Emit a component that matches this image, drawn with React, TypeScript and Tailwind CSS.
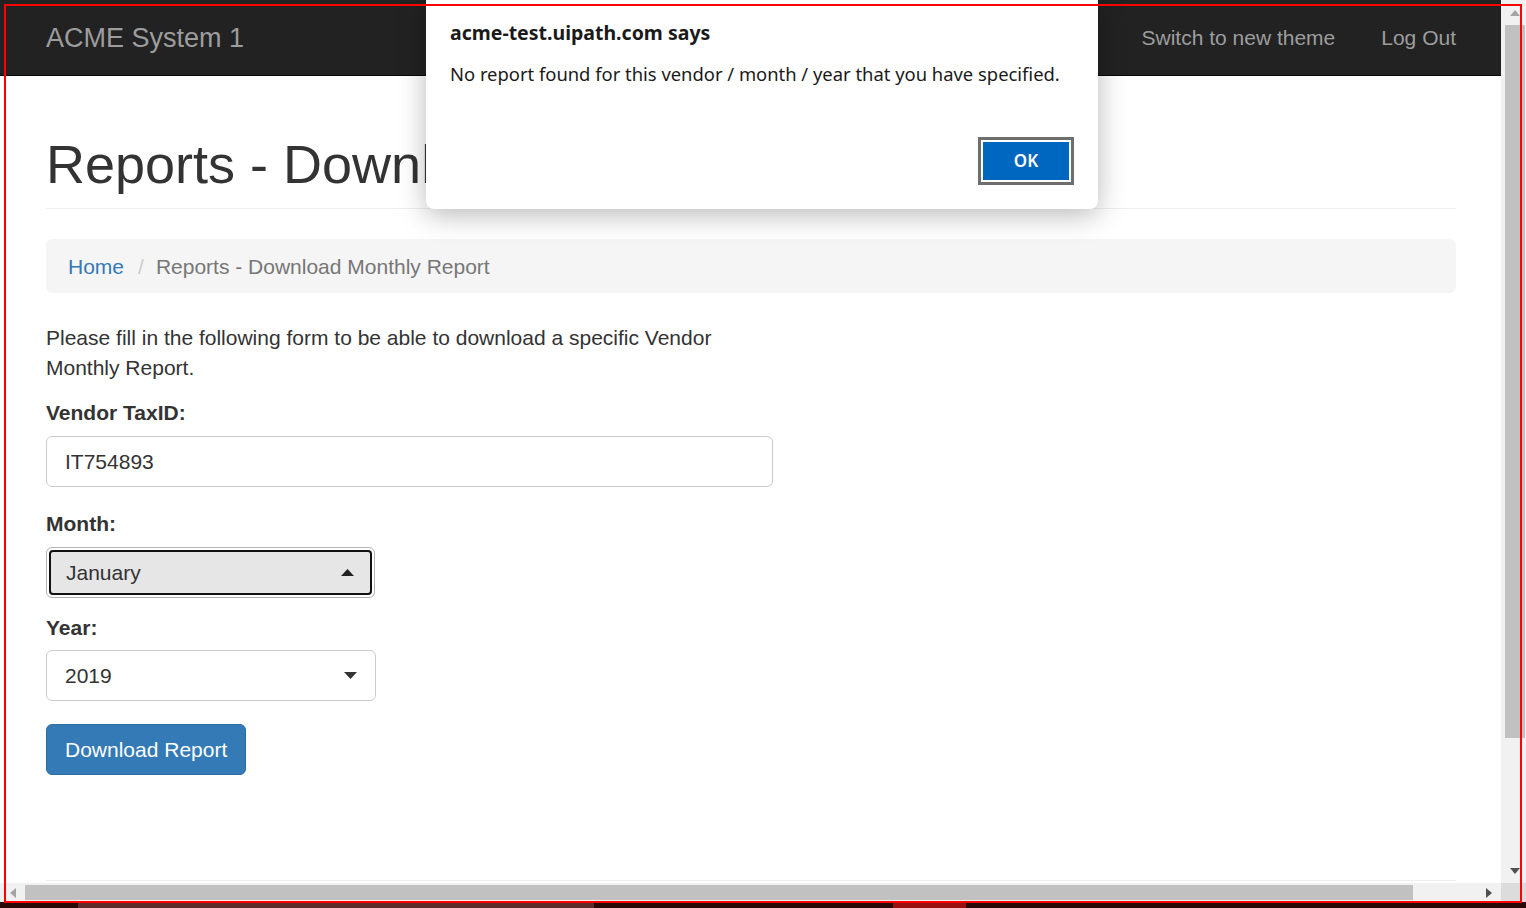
import React from 'react'

const sans = { fontFamily: '"Liberation Sans", Arial, Helvetica, sans-serif' }

function Caret({ up }: { up?: boolean }) {
  return (
    <svg width="13" height="7" viewBox="0 0 13 7" className="shrink-0">
      {up ? <path d="M0 7 L6.5 0 L13 7 Z" fill="#222" /> : <path d="M0 0 L13 0 L6.5 7 Z" fill="#333" />}
    </svg>
  )
}

function Navbar() {
  return (
    <div className="h-[76px] shrink-0 bg-[#222222] border-b border-[#080808] flex items-center justify-between pl-[46px] pr-[45px]">
      <span className="text-[27px] leading-none text-[#9d9d9d] mt-[2px]">ACME System 1</span>
      <div className="flex items-center gap-[46px] text-[21px] text-[#9d9d9d]">
        <span>Switch to new theme</span>
        <span>Log Out</span>
      </div>
    </div>
  )
}

function ReportForm() {
  return (
    <div className="pl-[46px] pr-[45px] text-[#333333]">
      <div className="pt-[59px] pb-[14px] border-b border-[#eeeeee]">
        <h1 className="text-[54px] leading-[59.4px] font-normal">Reports - Download Monthly Report</h1>
      </div>

      <div className="mt-[30px] h-[54px] rounded-[6px] bg-[#f5f5f5] px-[22px] flex items-center text-[21px]">
        <span className="text-[#337ab7]">Home</span>
        <span className="text-[#cccccc] pl-[14px] pr-[12px]">/</span>
        <span className="text-[#777777]">Reports - Download Monthly Report</span>
      </div>

      <div className="w-[727px] mt-[30px]">
        <p className="text-[21px] leading-[30px] pr-[10px]">
          Please fill in the following form to be able to download a specific Vendor Monthly Report.
        </p>

        <div className="mt-[15px] text-[21px] leading-[30px] font-bold">Vendor TaxID:</div>
        <div className="mt-[8px] h-[51px] rounded-[6px] border border-[#cccccc] flex items-center px-[18px] text-[21px]">
          IT754893
        </div>

        <div className="mt-[22px] text-[21px] leading-[30px] font-bold">Month:</div>
        <div className="mt-[8px] w-[329px] h-[51px] rounded-[6px] border border-[#b3b3b3] bg-white p-[2px]">
          <div className="h-full rounded-[4px] border-2 border-[#111111] bg-[#e6e6e6] flex items-center justify-between pl-[15px] pr-[16px] text-[21px]">
            <span>January</span>
            <Caret up />
          </div>
        </div>

        <div className="mt-[15px] text-[21px] leading-[30px] font-bold">Year:</div>
        <div className="mt-[7px] w-[330px] h-[51px] rounded-[6px] border border-[#cccccc] flex items-center justify-between pl-[18px] pr-[18px] text-[21px]">
          <span>2019</span>
          <Caret />
        </div>

        <button className="mt-[23px] h-[51px] px-[18px] rounded-[6px] bg-[#337ab7] border border-[#2e6da4] text-white text-[21px]">
          Download Report
        </button>
      </div>
    </div>
  )
}

function VScroll() {
  return (
    <div className="w-[25px] shrink-0 bg-[#f1f1f1] flex flex-col items-center">
      <div className="h-[25px] w-full flex items-center justify-center">
        <svg width="10" height="6" viewBox="0 0 10 6" className="ml-[2px]"><path d="M0 6 L5 0 L10 6 Z" fill="#a3a3a3" /></svg>
      </div>
      <div className="h-[713px] w-[20px] ml-[2px] bg-[#c1c1c1]" />
      <div className="flex-1" />
      <div className="h-[25px] w-full flex items-center justify-center">
        <svg width="10" height="6" viewBox="0 0 10 6" className="ml-[2px]"><path d="M0 0 L10 0 L5 6 Z" fill="#505050" /></svg>
      </div>
    </div>
  )
}

function HScroll() {
  return (
    <div className="h-[19px] shrink-0 flex">
      <div className="flex-1 bg-[#f1f1f1] flex items-center">
        <div className="w-[25px] flex items-center justify-center">
          <svg width="6" height="10" viewBox="0 0 6 10"><path d="M6 0 L6 10 L0 5 Z" fill="#a3a3a3" /></svg>
        </div>
        <div className="w-[1388px] h-[15px] bg-[#c1c1c1]" />
        <div className="flex-1 flex items-center justify-end pr-[9px]">
          <svg width="6" height="10" viewBox="0 0 6 10"><path d="M0 0 L6 5 L0 10 Z" fill="#505050" /></svg>
        </div>
      </div>
      <div className="w-[25px] bg-[#dcdcdc]" />
    </div>
  )
}

function BottomStrip() {
  return (
    <div className="h-[6px] shrink-0 flex bg-[#2a0808]">
      <div className="w-[78px]" />
      <div className="w-[516px] bg-[#5e2a2a]" />
      <div className="w-[299px]" />
      <div className="w-[73px] bg-[#9a1010]" />
    </div>
  )
}

function AlertDialog() {
  return (
    <div
      className="absolute left-[426px] top-0 w-[672px] h-[209px] bg-white rounded-b-[8px] shadow-[0_6px_28px_rgba(0,0,0,0.28)] pl-[24px] pr-[24px] flex flex-col text-[#1a1a1a]"
      style={{ fontFamily: '"Noto Sans", "Open Sans", sans-serif' }}
    >
      <div className="mt-[18px] text-[19.5px] leading-[30px] font-bold">acme-test.uipath.com says</div>
      <div className="mt-[12px] text-[18.4px] leading-[28px]">
        No report found for this vendor / month / year that you have specified.
      </div>
      <div className="mt-[49px] flex justify-end">
        <div className="w-[96px] h-[48px] border-[3px] border-[#6e6e6e] bg-white p-[2px]">
          <div className="h-full bg-[#0067c0] flex items-center justify-center text-white text-[17px] font-semibold">
            OK
          </div>
        </div>
      </div>
    </div>
  )
}

export default function App() {
  return (
    <div className="relative w-[1526px] h-[908px] overflow-hidden bg-white" style={sans}>
      <div className="flex flex-col h-full">
        <div className="flex h-[883px] shrink-0">
          <div className="flex-1 flex flex-col overflow-hidden">
            <Navbar />
            <ReportForm />
            <div className="mt-auto mb-[2px] ml-[46px] mr-[45px] border-t border-[#eeeeee]" />
          </div>
          <VScroll />
        </div>
        <HScroll />
        <BottomStrip />
      </div>

      <AlertDialog />

      {/* capture frame drawn over the page */}
      <div className="absolute left-[4px] top-[4px] w-[1518px] h-[899px] border-2 border-[#ff0000] pointer-events-none" />
    </div>
  )
}
